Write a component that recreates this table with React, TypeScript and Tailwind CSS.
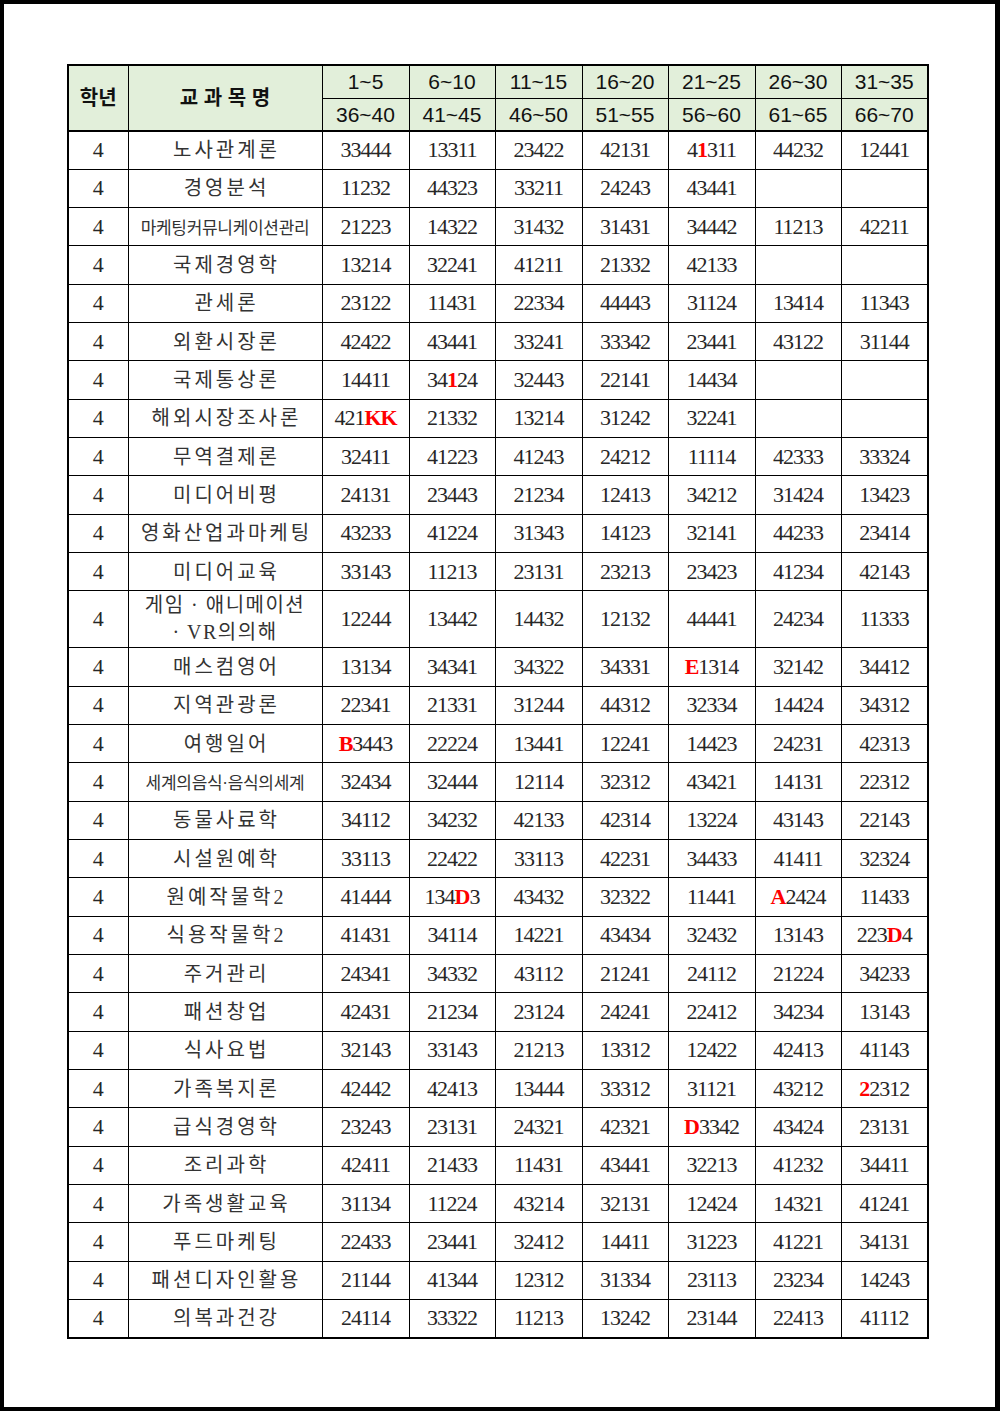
import { Fragment } from 'react';

// 성적 코드표: {x} 로 감싼 부분은 빨간 글씨
const rows: [string, string[]][] = [
  ['노사관계론', ['33444', '13311', '23422', '42131', '4{1}311', '44232', '12441']],
  ['경영분석', ['11232', '44323', '33211', '24243', '43441', '', '']],
  ['마케팅커뮤니케이션관리', ['21223', '14322', '31432', '31431', '34442', '11213', '42211']],
  ['국제경영학', ['13214', '32241', '41211', '21332', '42133', '', '']],
  ['관세론', ['23122', '11431', '22334', '44443', '31124', '13414', '11343']],
  ['외환시장론', ['42422', '43441', '33241', '33342', '23441', '43122', '31144']],
  ['국제통상론', ['14411', '34{1}24', '32443', '22141', '14434', '', '']],
  ['해외시장조사론', ['421{KK}', '21332', '13214', '31242', '32241', '', '']],
  ['무역결제론', ['32411', '41223', '41243', '24212', '11114', '42333', '33324']],
  ['미디어비평', ['24131', '23443', '21234', '12413', '34212', '31424', '13423']],
  ['영화산업과마케팅', ['43233', '41224', '31343', '14123', '32141', '44233', '23414']],
  ['미디어교육', ['33143', '11213', '23131', '23213', '23423', '41234', '42143']],
  ['게임 · 애니메이션\n· VR의의해', ['12244', '13442', '14432', '12132', '44441', '24234', '11333']],
  ['매스컴영어', ['13134', '34341', '34322', '34331', '{E}1314', '32142', '34412']],
  ['지역관광론', ['22341', '21331', '31244', '44312', '32334', '14424', '34312']],
  ['여행일어', ['{B}3443', '22224', '13441', '12241', '14423', '24231', '42313']],
  ['세계의음식·음식의세계', ['32434', '32444', '12114', '32312', '43421', '14131', '22312']],
  ['동물사료학', ['34112', '34232', '42133', '42314', '13224', '43143', '22143']],
  ['시설원예학', ['33113', '22422', '33113', '42231', '34433', '41411', '32324']],
  ['원예작물학2', ['41444', '134{D}3', '43432', '32322', '11441', '{A}2424', '11433']],
  ['식용작물학2', ['41431', '34114', '14221', '43434', '32432', '13143', '223{D}4']],
  ['주거관리', ['24341', '34332', '43112', '21241', '24112', '21224', '34233']],
  ['패션창업', ['42431', '21234', '23124', '24241', '22412', '34234', '13143']],
  ['식사요법', ['32143', '33143', '21213', '13312', '12422', '42413', '41143']],
  ['가족복지론', ['42442', '42413', '13444', '33312', '31121', '43212', '{2}2312']],
  ['급식경영학', ['23243', '23131', '24321', '42321', '{D}3342', '43424', '23131']],
  ['조리과학', ['42411', '21433', '11431', '43441', '32213', '41232', '34411']],
  ['가족생활교육', ['31134', '11224', '43214', '32131', '12424', '14321', '41241']],
  ['푸드마케팅', ['22433', '23441', '32412', '14411', '31223', '41221', '34131']],
  ['패션디자인활용', ['21144', '41344', '12312', '31334', '23113', '23234', '14243']],
  ['의복과건강', ['24114', '33322', '11213', '13242', '23144', '22413', '41112']],
];

const ranges = ['1~5', '6~10', '11~15', '16~20', '21~25', '26~30', '31~35'];
const ranges2 = ['36~40', '41~45', '46~50', '51~55', '56~60', '61~65', '66~70'];
const colWidths = [87, 86, 87, 86, 87, 86, 87];

function Code({ value }: { value: string }) {
  const parts = value.split(/(\{[^}]+\})/).filter(Boolean);
  return (
    <>
      {parts.map((p, i) =>
        p.startsWith('{') ? (
          <span key={i} className="text-[#ff0000] font-bold">
            {p.slice(1, -1)}
          </span>
        ) : (
          <Fragment key={i}>{p}</Fragment>
        ),
      )}
    </>
  );
}

function SubjectName({ name }: { name: string }) {
  if (name.includes('\n')) {
    const [a, b] = name.split('\n');
    return (
      <div className="leading-[27px] tracking-[1.5px]">
        {a}
        <br />
        {b}
      </div>
    );
  }
  if (name.length >= 10) {
    return <span className="text-[17px] tracking-[-0.3px]">{name}</span>;
  }
  return <span className="tracking-[3px] pl-[3px]">{name}</span>;
}

export default function App() {
  const head = "font-['Liberation_Sans','Noto_Sans_CJK_KR',sans-serif] text-[#111] bg-[#e2efda]";
  return (
    <div className="w-[1000px] h-[1411px] bg-white border-black border-t-4 border-l-4 border-r-[5px] border-b-4 pl-[63px] pt-[60px]">
      <table className="table-fixed border-collapse border-2 border-black w-[860px] font-['Liberation_Serif','Noto_Sans_CJK_KR',serif] text-[#262626]">
        <colgroup>
          <col className="w-[60px]" />
          <col className="w-[194px]" />
          {colWidths.map((w, i) => (
            <col key={i} style={{ width: w }} />
          ))}
        </colgroup>
        <thead>
          <tr className="h-[33px]">
            <th rowSpan={2} className={`${head} border border-black border-b-2 text-[20px] font-bold`}>
              학년
            </th>
            <th rowSpan={2} className={`${head} border border-black border-b-2 text-[20px] font-bold`}>
              교 과 목 명
            </th>
            {ranges.map((r) => (
              <th key={r} className={`${head} border border-black text-[21px] font-normal leading-none`}>
                {r}
              </th>
            ))}
          </tr>
          <tr className="h-[33px]">
            {ranges2.map((r) => (
              <th key={r} className={`${head} border border-black border-b-2 text-[21px] font-normal leading-none`}>
                {r}
              </th>
            ))}
          </tr>
        </thead>
        <tbody>
          {rows.map(([name, codes]) => (
            <tr key={name} className={name.includes('\n') ? 'h-[57px]' : 'h-[38.34px]'}>
              <td className="border border-black text-center text-[22px] leading-none">4</td>
              <td className="border border-black text-center text-[20px] leading-none text-[#333]">
                <SubjectName name={name} />
              </td>
              {codes.map((c, i) => (
                <td key={i} className="border border-black text-center text-[22px] tracking-[-1px] leading-none">
                  <Code value={c} />
                </td>
              ))}
            </tr>
          ))}
        </tbody>
      </table>
    </div>
  );
}
